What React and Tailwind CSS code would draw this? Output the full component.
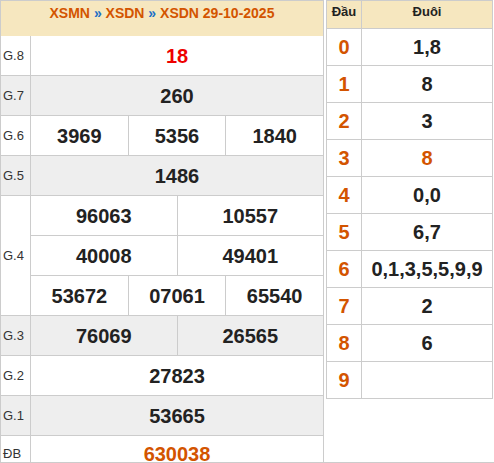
import React from "react";

function Cell({ children, last, color = "text-[#222222]" }) {
  return (
    <div
      className={`flex-1 flex items-center justify-center text-[20px] font-bold ${color} ${
        last ? "" : "border-r border-[#cccccc]"
      }`}
    >
      {children}
    </div>
  );
}

function Row({ label, gray, short, children }) {
  return (
    <div
      className={`flex ${short ? "h-[35px]" : "h-[40px] border-b border-[#cccccc]"} ${
        gray ? "bg-[#eeeeee]" : "bg-white"
      }`}
    >
      <div className="w-[30px] shrink-0 border-r border-[#cccccc] flex items-center pl-[2px] text-[13px] text-[#333333]">
        {label}
      </div>
      <div className="flex-1 flex">{children}</div>
    </div>
  );
}

const loto = [
  ["0", "1,8"],
  ["1", "8"],
  ["2", "3"],
  ["3", "8", true],
  ["4", "0,0"],
  ["5", "6,7"],
  ["6", "0,1,3,5,5,9,9"],
  ["7", "2"],
  ["8", "6"],
  ["9", ""],
];

export default function App() {
  return (
    <div className="w-[494px] h-[463px] overflow-hidden border-b border-[#cccccc] flex items-start bg-white font-['Liberation_Sans',Arial,sans-serif]">
      <div className="w-[324px] shrink-0 border-x border-t border-[#cccccc]">
        <div className="h-[35px] bg-[#f6e7bf] text-center pt-[3px] text-[14px] leading-[18px] font-bold text-[#d35400]">
          XSMN <span className="text-[#1c6fc6]">»</span> XSDN{" "}
          <span className="text-[#1c6fc6]">»</span> XSDN 29-10-2025
        </div>
        <Row label="G.8">
          <Cell last color="text-[#ee0000]">18</Cell>
        </Row>
        <Row label="G.7" gray>
          <Cell last>260</Cell>
        </Row>
        <Row label="G.6">
          <Cell>3969</Cell>
          <Cell>5356</Cell>
          <Cell last>1840</Cell>
        </Row>
        <Row label="G.5" gray>
          <Cell last>1486</Cell>
        </Row>
        <div className="flex border-b border-[#cccccc] bg-white">
          <div className="w-[30px] shrink-0 border-r border-[#cccccc] flex items-center pl-[2px] text-[13px] text-[#333333]">
            G.4
          </div>
          <div className="flex-1 flex flex-col">
            <div className="flex h-[40px] border-b border-[#cccccc]">
              <Cell>96063</Cell>
              <Cell last>10557</Cell>
            </div>
            <div className="flex h-[40px] border-b border-[#cccccc]">
              <Cell>40008</Cell>
              <Cell last>49401</Cell>
            </div>
            <div className="flex h-[39px]">
              <Cell>53672</Cell>
              <Cell>07061</Cell>
              <Cell last>65540</Cell>
            </div>
          </div>
        </div>
        <Row label="G.3" gray>
          <Cell>76069</Cell>
          <Cell last>26565</Cell>
        </Row>
        <Row label="G.2">
          <Cell last>27823</Cell>
        </Row>
        <Row label="G.1" gray>
          <Cell last>53665</Cell>
        </Row>
        <Row label="ĐB" short>
          <Cell last color="text-[#d35400]">630038</Cell>
        </Row>
      </div>

      <div className="ml-[2px] w-[167px] shrink-0 border-x border-t border-[#cccccc]">
        <div className="flex h-[28px] border-b border-[#cccccc] bg-[#f6e7bf] text-[13px] leading-[16px] font-bold text-[#222222]">
          <div className="w-[35px] shrink-0 border-r border-[#cccccc] text-center pt-[3px]">
            Đầu
          </div>
          <div className="flex-1 text-center pt-[3px]">Đuôi</div>
        </div>
        {loto.map(([d, t, hl]) => (
          <div
            key={d}
            className="flex h-[37px] border-b border-[#cccccc] text-[20px] font-bold"
          >
            <div className="w-[35px] shrink-0 border-r border-[#cccccc] flex items-center justify-center text-[#d35400]">
              {d}
            </div>
            <div
              className={`flex-1 flex items-center justify-center ${
                hl ? "text-[#d35400]" : "text-[#222222]"
              }`}
            >
              {t}
            </div>
          </div>
        ))}
      </div>
    </div>
  );
}
